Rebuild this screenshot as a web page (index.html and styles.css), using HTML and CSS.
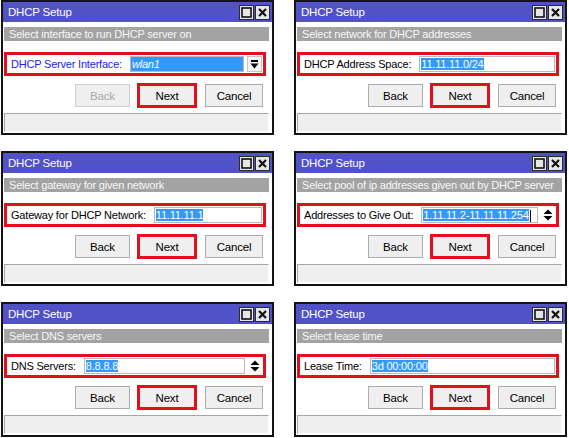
FILE: index.html
```html
<!DOCTYPE html>
<html lang="en">
<head>
<meta charset="utf-8">
<title>DHCP Setup</title>
<link rel="stylesheet" href="styles.css">
</head>
<body>

<div class="sheet">

  <!-- step 1: interface -->
  <div class="dialog">
    <div class="titlebar">
      <span class="title">DHCP Setup</span>
      <span class="win-btn"><svg width="11" height="11" viewBox="0 0 11 11"><rect x="1" y="1" width="9" height="9" fill="none" stroke="#111" stroke-width="1.6"/></svg></span>
      <span class="win-btn"><svg width="9" height="9" viewBox="0 0 9 9"><path d="M1 1L8 8M8 1L1 8" stroke="#111" stroke-width="2.2"/></svg></span>
    </div>
    <div class="subtitle">Select interface to run DHCP server on</div>
    <div class="field">
      <span class="field-label field-label-link">DHCP Server Interface:</span>
      <span class="field-input field-input-picked"><i>wlan1</i></span>
      <span class="drop-btn"><svg width="9" height="9" viewBox="0 0 9 9"><rect x="1" y="0" width="7" height="2" fill="#000"/><path d="M0.5 3.5H8.5L4.5 8.5Z" fill="#000"/></svg></span>
    </div>
    <div class="actions">
      <button type="button" class="btn btn-back" disabled>Back</button>
      <button type="button" class="btn btn-next">Next</button>
      <button type="button" class="btn btn-cancel">Cancel</button>
    </div>
    <div class="statusbar"></div>
  </div>

  <!-- step 2: address space -->
  <div class="dialog">
    <div class="titlebar">
      <span class="title">DHCP Setup</span>
      <span class="win-btn"><svg width="11" height="11" viewBox="0 0 11 11"><rect x="1" y="1" width="9" height="9" fill="none" stroke="#111" stroke-width="1.6"/></svg></span>
      <span class="win-btn"><svg width="9" height="9" viewBox="0 0 9 9"><path d="M1 1L8 8M8 1L1 8" stroke="#111" stroke-width="2.2"/></svg></span>
    </div>
    <div class="subtitle">Select network for DHCP addresses</div>
    <div class="field">
      <span class="field-label">DHCP Address Space:</span>
      <span class="field-input"><span class="sel">11.11.11.0/24</span></span>
    </div>
    <div class="actions">
      <button type="button" class="btn btn-back">Back</button>
      <button type="button" class="btn btn-next">Next</button>
      <button type="button" class="btn btn-cancel">Cancel</button>
    </div>
    <div class="statusbar"></div>
  </div>

  <!-- step 3: gateway -->
  <div class="dialog">
    <div class="titlebar">
      <span class="title">DHCP Setup</span>
      <span class="win-btn"><svg width="11" height="11" viewBox="0 0 11 11"><rect x="1" y="1" width="9" height="9" fill="none" stroke="#111" stroke-width="1.6"/></svg></span>
      <span class="win-btn"><svg width="9" height="9" viewBox="0 0 9 9"><path d="M1 1L8 8M8 1L1 8" stroke="#111" stroke-width="2.2"/></svg></span>
    </div>
    <div class="subtitle">Select gateway for given network</div>
    <div class="field">
      <span class="field-label">Gateway for DHCP Network:</span>
      <span class="field-input"><span class="sel">11.11.11.1</span></span>
    </div>
    <div class="actions">
      <button type="button" class="btn btn-back">Back</button>
      <button type="button" class="btn btn-next">Next</button>
      <button type="button" class="btn btn-cancel">Cancel</button>
    </div>
    <div class="statusbar"></div>
  </div>

  <!-- step 4: pool -->
  <div class="dialog">
    <div class="titlebar">
      <span class="title">DHCP Setup</span>
      <span class="win-btn"><svg width="11" height="11" viewBox="0 0 11 11"><rect x="1" y="1" width="9" height="9" fill="none" stroke="#111" stroke-width="1.6"/></svg></span>
      <span class="win-btn"><svg width="9" height="9" viewBox="0 0 9 9"><path d="M1 1L8 8M8 1L1 8" stroke="#111" stroke-width="2.2"/></svg></span>
    </div>
    <div class="subtitle">Select pool of ip addresses given out by DHCP server</div>
    <div class="field">
      <span class="field-label">Addresses to Give Out:</span>
      <span class="field-input"><span class="sel">1.11.11.2-11.11.11.254</span><span class="caret"></span></span>
      <span class="spinner"><svg width="10" height="14" viewBox="0 0 10 14"><path d="M0.5 6H9.5L5 1.5Z" fill="#000"/><path d="M0.5 8H9.5L5 12.5Z" fill="#000"/></svg></span>
    </div>
    <div class="actions">
      <button type="button" class="btn btn-back">Back</button>
      <button type="button" class="btn btn-next">Next</button>
      <button type="button" class="btn btn-cancel">Cancel</button>
    </div>
    <div class="statusbar"></div>
  </div>

  <!-- step 5: dns -->
  <div class="dialog">
    <div class="titlebar">
      <span class="title">DHCP Setup</span>
      <span class="win-btn"><svg width="11" height="11" viewBox="0 0 11 11"><rect x="1" y="1" width="9" height="9" fill="none" stroke="#111" stroke-width="1.6"/></svg></span>
      <span class="win-btn"><svg width="9" height="9" viewBox="0 0 9 9"><path d="M1 1L8 8M8 1L1 8" stroke="#111" stroke-width="2.2"/></svg></span>
    </div>
    <div class="subtitle">Select DNS servers</div>
    <div class="field">
      <span class="field-label">DNS Servers:</span>
      <span class="field-input"><span class="sel">8.8.8.8</span></span>
      <span class="spinner"><svg width="10" height="14" viewBox="0 0 10 14"><path d="M0.5 6H9.5L5 1.5Z" fill="#000"/><path d="M0.5 8H9.5L5 12.5Z" fill="#000"/></svg></span>
    </div>
    <div class="actions">
      <button type="button" class="btn btn-back">Back</button>
      <button type="button" class="btn btn-next">Next</button>
      <button type="button" class="btn btn-cancel">Cancel</button>
    </div>
    <div class="statusbar"></div>
  </div>

  <!-- step 6: lease -->
  <div class="dialog">
    <div class="titlebar">
      <span class="title">DHCP Setup</span>
      <span class="win-btn"><svg width="11" height="11" viewBox="0 0 11 11"><rect x="1" y="1" width="9" height="9" fill="none" stroke="#111" stroke-width="1.6"/></svg></span>
      <span class="win-btn"><svg width="9" height="9" viewBox="0 0 9 9"><path d="M1 1L8 8M8 1L1 8" stroke="#111" stroke-width="2.2"/></svg></span>
    </div>
    <div class="subtitle">Select lease time</div>
    <div class="field">
      <span class="field-label">Lease Time:</span>
      <span class="field-input"><span class="sel">3d 00:00:00</span></span>
    </div>
    <div class="actions">
      <button type="button" class="btn btn-back">Back</button>
      <button type="button" class="btn btn-next">Next</button>
      <button type="button" class="btn btn-cancel">Cancel</button>
    </div>
    <div class="statusbar"></div>
  </div>

</div>

</body>
</html>
```

FILE: styles.css
```css
* {
  box-sizing: border-box;
}

body {
  margin: 0;
  background-color: #fff;
  font-family: "Liberation Sans", Arial, sans-serif;
  font-size: 11px;
  letter-spacing: -0.2px;
  color: #000;
}

.sheet {
  display: grid;
  grid-template-columns: repeat(2, 273px);
  column-gap: 20px;
  row-gap: 16px;
  padding-left: 1px;
}

.dialog {
  display: flex;
  flex-direction: column;
  height: 135px;
  border: 2px solid #141414;
  background-color: #fff;
}

.titlebar {
  display: flex;
  align-items: center;
  gap: 1px;
  height: 20px;
  padding: 0 2px 0 5px;
  background-color: #5252c8;
  color: #fff;
}

.title {
  flex: 1;
  font-size: 11.5px;
}

.win-btn {
  display: flex;
  align-items: center;
  justify-content: center;
  width: 15px;
  height: 15px;
  border: 1px solid #2a2a2a;
  background-color: #e6e6e6;
}

.subtitle {
  height: 14px;
  margin: 5px 3px 0 1px;
  padding-left: 5px;
  line-height: 14px;
  background-color: #a3a3a3;
  color: #f7f7f7;
  white-space: nowrap;
  overflow: hidden;
}

.field {
  display: flex;
  align-items: center;
  height: 24px;
  margin: 11px 6px 0 1px;
  padding: 0 1px 0 4px;
  border: 3px solid #e3101c;
}

.field-label {
  margin-right: 8px;
  white-space: nowrap;
}

.field-label-link {
  color: #1c1cf0;
}

.field-input {
  flex: 1;
  height: 16px;
  padding-left: 1px;
  border: 1px solid #b9b9b9;
  background-color: #fff;
  line-height: 14px;
  white-space: nowrap;
  overflow: hidden;
}

.field-input-picked {
  background-color: #3399ff;
  color: #fff;
}

.sel {
  background-color: #3399ff;
  color: #fff;
}

.caret {
  display: inline-block;
  width: 1px;
  height: 13px;
  margin-left: 1px;
  vertical-align: middle;
  background-color: #000;
}

.drop-btn {
  display: flex;
  align-items: center;
  justify-content: center;
  width: 15px;
  height: 16px;
  margin-left: 3px;
  border: 1px solid #c4c4c4;
  background-color: #f4f4f4;
}

.spinner {
  display: flex;
  align-items: center;
  justify-content: center;
  width: 15px;
  height: 16px;
  margin-left: 2px;
}

.actions {
  display: flex;
  align-items: center;
  justify-content: flex-end;
  gap: 7px;
  height: 25px;
  margin-top: 7px;
  padding-right: 9px;
}

.btn {
  height: 23px;
  padding: 0;
  border: 1px solid #adadad;
  background-color: #efefef;
  font-family: inherit;
  font-size: 11.5px;
  letter-spacing: -0.2px;
  color: #000;
}

.btn-back {
  width: 55px;
}

.btn-back:disabled {
  color: #a8a8a8;
  border-color: #cfcfcf;
}

.btn-next {
  width: 60px;
  height: 25px;
  border: 3px solid #e3101c;
}

.btn-cancel {
  width: 58px;
  margin-left: 1px;
}

.statusbar {
  height: 19px;
  margin: 5px 3px 0 1px;
  border: 1px solid;
  border-color: #a6a6a6 #fff #fff #a6a6a6;
  background-color: #efefef;
}
```
